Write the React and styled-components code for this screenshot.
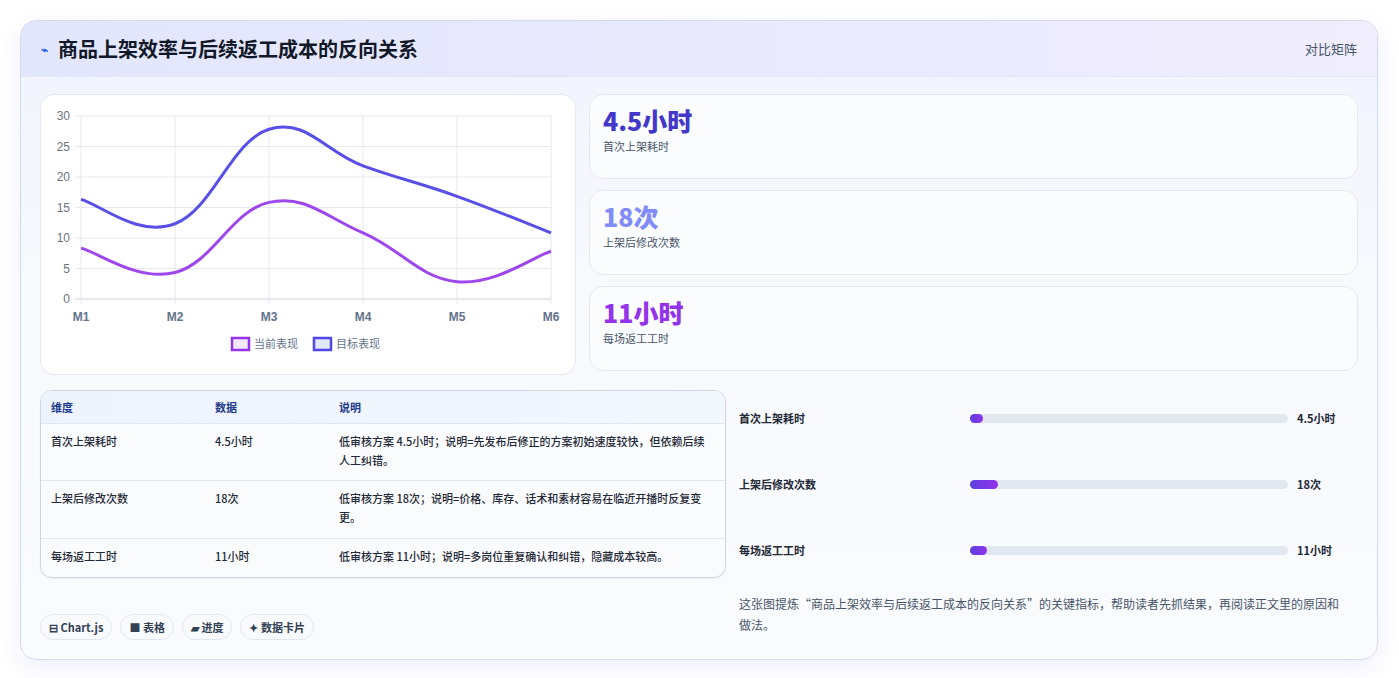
import React from "react";
import styled, { createGlobalStyle } from "styled-components";

const G = createGlobalStyle`
  body{margin:0;background:#fff;font-family:"Noto Sans CJK SC","Noto Sans",sans-serif;color:#1e293b;}
`;
const Page = styled.div`padding:20px 21px 20px 20px;`;
const Card = styled.div`
  border:1px solid #d5dbef;border-radius:16px;overflow:hidden;
  background:linear-gradient(180deg,#f1f3fe 0%,#f8f9fd 40%,#fafbfd 100%);
  box-shadow:0 8px 22px rgba(99,102,241,.10);
`;
const Header = styled.div`
  height:55px;display:flex;align-items:center;justify-content:space-between;
  padding:0 20px;background:linear-gradient(90deg,#e2e6fd,#eae9fd 60%,#f0edfd);
  border-bottom:1px solid #e3e6f5;
`;
const Title = styled.h1`margin:0;font-size:20px;font-weight:700;color:#111827;display:flex;align-items:center;gap:10px;`;
const TIcon = styled.span`font-size:12px;color:#2563eb;`;
const Tag = styled.span`font-size:13px;color:#475569;`;
const Body = styled.div`padding:17px 19px 19px;display:flex;flex-direction:column;gap:15px;`;
const Top = styled.div`display:grid;grid-template-columns:536px 1fr;column-gap:13px;`;
const Bottom = styled.div`display:grid;grid-template-columns:686px 1fr;column-gap:13px;`;
const ChartCard = styled.div`background:#fff;border:1px solid #e4e8f2;border-radius:14px;height:279px;position:relative;`;
const Stats = styled.div`display:flex;flex-direction:column;gap:11px;`;
const Stat = styled.div`height:85px;border:1px solid #e4e8f2;border-radius:14px;background:#fbfcfe;padding:8px 13px;box-sizing:border-box;`;
const StatV = styled.div`font-size:25px;font-weight:800;color:${p=>p.c};line-height:34px;`;
const StatL = styled.div`font-size:11px;color:#475569;margin-top:1px;`;
const Left = styled.div`display:flex;flex-direction:column;`;
const Table = styled.div`border:1px solid #cfd6e2;border-radius:12px;overflow:hidden;background:#fafbfd;box-shadow:0 1px 2px rgba(0,0,0,.05);`;
const Row = styled.div`
  display:grid;grid-template-columns:164px 124px 1fr;padding:0 10px;
  font-size:11px;font-weight:${p=>p.head?600:500};color:${p=>p.head?"#1e3a8a":"#1f2937"};
  background:${p=>p.head?"linear-gradient(90deg,#edf4fe,#f3f7fe)":"transparent"};
  border-bottom:${p=>p.last?"none":"1px solid #e2e7ef"};
  padding-top:${p=>p.head?"7px":"8px"};padding-bottom:${p=>p.head?"6px":"8px"};
  line-height:19px;min-height:${p=>p.h}px;box-sizing:border-box;
`;
const Chips = styled.div`display:flex;gap:8px;margin-top:36px;`;
const Chip = styled.span`font-size:11px;font-weight:600;color:#334155;border:1px solid #e2e7ef;background:#f8fafc;border-radius:14px;padding:4px 8px;`;
const Right = styled.div`padding:0 19px 0 0;`;
const Bar = styled.div`display:grid;grid-template-columns:231px 327px 1fr;align-items:center;height:66px;font-size:11px;font-weight:600;color:#1f2937;&:first-child{margin-top:-5px;}`;
const Track = styled.div`height:9px;border-radius:5px;background:#e2e8f0;margin-right:9px;`;
const Fill = styled.div`height:9px;border-radius:5px;background:linear-gradient(90deg,#5b3fe0,#9333ea);`;
const Note = styled.p`margin:10px 0 0;font-size:12px;color:#475569;line-height:21px;`;

const px = i=>40+i*94;
function path(d){
  const p=d.map((v,i)=>[px(i),205-v*6.1]);
  let s=`M${p[0][0]},${p[0][1]}`;
  for(let i=0;i<p.length-1;i++){
    const p0=p[i-1]||p[i],p1=p[i],p2=p[i+1],p3=p[i+2]||p2;const t=0.2;
    s+=` C${p1[0]+(p2[0]-p0[0])*t},${p1[1]+(p2[1]-p0[1])*t} ${p2[0]-(p3[0]-p1[0])*t},${p2[1]-(p3[1]-p1[1])*t} ${p2[0]},${p2[1]}`;
  }
  return s;
}
function Chart(){
  const ys=[0,5,10,15,20,25,30];
  return <svg width="536" height="279" style={{position:"absolute",left:0,top:0}} fontFamily="Liberation Sans, sans-serif">
    {ys.map(v=><g key={v}><line x1="34" x2="510" y1={204-v*6.1} y2={204-v*6.1} stroke={v===0?"#cbd2dd":"#e5e8ef"}/>
      <text x="29" y={208-v*6.1} fontSize="12" fill="#6b7280" textAnchor="end">{v}</text></g>)}
    {[0,1,2,3,4,5].map(i=><g key={i}><line x1={px(i)} x2={px(i)} y1="21" y2="209" stroke="#e5e8ef"/>
      <text x={px(i)} y="226" fontSize="12" fontWeight="700" fill="#64748b" textAnchor="middle">M{i+1}</text></g>)}
    <path d={path([16.5,12.5,28,22,17,11])} fill="none" stroke="#4f46e5" strokeWidth="3" opacity=".95"/>
    <path d={path([8.5,4.5,16,11,3,8])} fill="none" stroke="#9333ea" strokeWidth="3" opacity=".9"/>
    <rect x="191" y="243" width="17" height="12" fill="#f3e8ff" stroke="#9333ea" strokeWidth="2.5"/>
    <text x="213" y="253" fontSize="11" fill="#64748b" fontFamily="Noto Sans CJK SC">当前表现</text>
    <rect x="273" y="243" width="17" height="12" fill="#e0e7ff" stroke="#4f46e5" strokeWidth="2.5"/>
    <text x="295" y="253" fontSize="11" fill="#64748b" fontFamily="Noto Sans CJK SC">目标表现</text>
  </svg>;
}
const rows=[["首次上架耗时","4.5小时","低审核方案 4.5小时；说明=先发布后修正的方案初始速度较快，但依赖后续人工纠错。",57],
["上架后修改次数","18次","低审核方案 18次；说明=价格、库存、话术和素材容易在临近开播时反复变更。",58],
["每场返工工时","11小时","低审核方案 11小时；说明=多岗位重复确认和纠错，隐藏成本较高。",38]];
export default function App(){
  return <Page><G/><Card>
    <Header><Title><TIcon>⌁</TIcon>商品上架效率与后续返工成本的反向关系</Title><Tag>对比矩阵</Tag></Header>
    <Body>
      <Top>
        <ChartCard><Chart/></ChartCard>
        <Stats>
          <Stat><StatV c="#4338ca">4.5小时</StatV><StatL>首次上架耗时</StatL></Stat>
          <Stat><StatV c="#818cf8">18次</StatV><StatL>上架后修改次数</StatL></Stat>
          <Stat><StatV c="#9333ea">11小时</StatV><StatL>每场返工工时</StatL></Stat>
        </Stats>
      </Top>
      <Bottom>
        <Left>
          <Table>
            <Row head h={33}><span>维度</span><span>数据</span><span>说明</span></Row>
            {rows.map((r,i)=><Row key={i} h={r[3]} last={i===2}><span>{r[0]}</span><span>{r[1]}</span><span>{r[2]}</span></Row>)}
          </Table>
          <Chips><Chip>⊟ Chart.js</Chip><Chip>■ 表格</Chip><Chip>▰ 进度</Chip><Chip>✦ 数据卡片</Chip></Chips>
        </Left>
        <Right>
          {[["首次上架耗时","4.5小时",13],["上架后修改次数","18次",28],["每场返工工时","11小时",17]].map(b=>
            <Bar key={b[0]}><span>{b[0]}</span><Track><Fill style={{width:b[2]}}/></Track><span>{b[1]}</span></Bar>)}
          <Note>这张图提炼“商品上架效率与后续返工成本的反向关系”的关键指标，帮助读者先抓结果，再阅读正文里的原因和做法。</Note>
        </Right>
      </Bottom>
    </Body>
  </Card></Page>;
}
